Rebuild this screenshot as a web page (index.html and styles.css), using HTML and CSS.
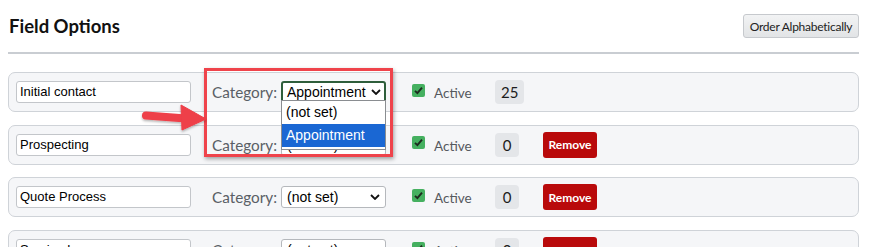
FILE: index.html
```html
<!DOCTYPE html>
<html>
<head>
<meta charset="utf-8">
<link rel="stylesheet" href="styles.css">
</head>
<body>
<div class="page">
  <header class="head">
    <h1 class="title">Field Options</h1>
    <button class="btn-order">Order Alphabetically</button>
  </header>
  <div class="divider"></div>
  <div class="list">
    <div class="row">
      <div class="txt">Initial contact</div>
      <span class="cat">Category:</span>
      <div class="sel sel-focus"><span>Appointment</span><svg class="chev" viewBox="0 0 10 6"><path d="M1 1 L5 5 L9 1" fill="none" stroke="#111" stroke-width="1.8"/></svg></div>
      <span class="chk"><svg viewBox="0 0 13 13"><path d="M3 6.8 L5.4 9.2 L10 3.6" fill="none" stroke="#1d2b1f" stroke-width="1.9"/></svg></span>
      <span class="act">Active</span>
      <div class="badge-cell"><span class="badge">25</span></div>
    </div>
    <div class="row">
      <div class="txt">Prospecting</div>
      <span class="cat">Category:</span>
      <div class="sel"><span>(not set)</span><svg class="chev" viewBox="0 0 10 6"><path d="M1 1 L5 5 L9 1" fill="none" stroke="#111" stroke-width="1.8"/></svg></div>
      <span class="chk"><svg viewBox="0 0 13 13"><path d="M3 6.8 L5.4 9.2 L10 3.6" fill="none" stroke="#1d2b1f" stroke-width="1.9"/></svg></span>
      <span class="act">Active</span>
      <div class="badge-cell"><span class="badge">0</span></div>
      <button class="btn-remove">Remove</button>
    </div>
    <div class="row">
      <div class="txt">Quote Process</div>
      <span class="cat">Category:</span>
      <div class="sel"><span>(not set)</span><svg class="chev" viewBox="0 0 10 6"><path d="M1 1 L5 5 L9 1" fill="none" stroke="#111" stroke-width="1.8"/></svg></div>
      <span class="chk"><svg viewBox="0 0 13 13"><path d="M3 6.8 L5.4 9.2 L10 3.6" fill="none" stroke="#1d2b1f" stroke-width="1.9"/></svg></span>
      <span class="act">Active</span>
      <div class="badge-cell"><span class="badge">0</span></div>
      <button class="btn-remove">Remove</button>
    </div>
    <div class="row">
      <div class="txt">Service Issue</div>
      <span class="cat">Category:</span>
      <div class="sel"><span>(not set)</span><svg class="chev" viewBox="0 0 10 6"><path d="M1 1 L5 5 L9 1" fill="none" stroke="#111" stroke-width="1.8"/></svg></div>
      <span class="chk"><svg viewBox="0 0 13 13"><path d="M3 6.8 L5.4 9.2 L10 3.6" fill="none" stroke="#1d2b1f" stroke-width="1.9"/></svg></span>
      <span class="act">Active</span>
      <div class="badge-cell"><span class="badge">0</span></div>
      <button class="btn-remove">Remove</button>
    </div>
  </div>

  <div class="dropdown">
    <div class="opt">(not set)</div>
    <div class="opt opt-hi">Appointment</div>
  </div>
  <div class="callout"></div>
  <svg class="arrow" viewBox="0 0 80 34" width="80" height="34">
    <defs>
      <filter id="sh" x="-20%" y="-20%" width="140%" height="160%">
        <feDropShadow dx="0" dy="1.5" stdDeviation="1.2" flood-color="#000" flood-opacity="0.3"/>
      </filter>
    </defs>
    <g filter="url(#sh)" fill="#ee3f48" stroke="#ee3f48">
      <line x1="8" y1="12.5" x2="48" y2="15.5" stroke-width="8" stroke-linecap="round"/>
      <polygon points="43,2 68,16 44,27" stroke-width="1" stroke-linejoin="round"/>
    </g>
  </svg>
</div>
</body>
</html>
```
FILE: styles.css
```css
* { box-sizing: border-box; }
html, body { margin: 0; padding: 0; background: #fff; }
body { font-family: Lato, "Noto Sans", sans-serif; overflow: hidden; width: 870px; height: 247px; }
.page { position: relative; padding: 0 11px 0 8px; height: 247px; overflow: hidden; }
.head { height: 52px; display: flex; align-items: center; justify-content: space-between; }
.title { margin: 0 0 0 1px; font-size: 18.5px; font-weight: 700; color: #111; letter-spacing: 0; }
.btn-order {
  width: 116px; height: 24px; padding: 0; margin: 0; white-space: nowrap;
  font-family: Lato, "Noto Sans", sans-serif; font-size: 12px; letter-spacing: -0.25px; color: #222;
  background: linear-gradient(#f2f3f4, #e2e4e6);
  border: 1px solid #c6c9cd; border-radius: 3px;
}
.divider { height: 2px; background: #c9cdd2; }
.list { margin-top: 18px; }
.row {
  height: 40px; margin-bottom: 12.7px;
  display: flex; align-items: center;
  padding-left: 7px;
  background: #f5f6f8; border: 1px solid #cfd3d8; border-radius: 7px;
}
.txt {
  width: 175px; height: 22px; padding: 0 3px;
  background: #fff; border: 1px solid #c3c6ca; border-radius: 3px;
  font-family: "Liberation Sans", Arial, sans-serif; font-size: 13px; line-height: 20px; color: #000;
}
.cat { width: 69px; margin-left: 21px; font-size: 15.3px; color: #5a5f66; }
.sel {
  width: 105px; height: 22px; display: flex; align-items: center; justify-content: space-between;
  padding: 0 5px 0 5px;
  background: #fff; border: 1px solid #b5b8bc; border-radius: 3px;
  font-family: "Liberation Sans", Arial, sans-serif; font-size: 14px; color: #000;
}
.sel-focus { border: 2px solid #2e5e3b; padding-left: 4px; padding-right: 3px; }
.chev { width: 10px; height: 6px; }
.chk {
  width: 13px; height: 13px; margin-left: 26px; margin-top: -4px;
  background: #45b060; border-radius: 2px; display: flex;
}
.chk svg { width: 13px; height: 13px; }
.act { width: 61px; margin-left: 9px; margin-top: 2px; font-size: 13.5px; color: #55595e; }
.badge-cell { width: 48px; display: flex; }
.badge {
  min-width: 24px; height: 24px; padding: 0 6px;
  display: flex; align-items: center; justify-content: center;
  background: #e4e6e9; border-radius: 4px; font-size: 15px; color: #1c1c1c;
}
.btn-remove {
  width: 54px; height: 26px; padding: 0; margin: 0;
  background: #b90a0b; color: #fff; border: none; border-radius: 3px;
  font-family: Lato, "Noto Sans", sans-serif; font-size: 12px; font-weight: 700;
}
.dropdown {
  position: absolute; left: 281px; top: 100px; width: 105px; padding-bottom: 2px;
  background: #fff; border: 1px solid #8a8d91;
  font-family: "Liberation Sans", Arial, sans-serif; font-size: 14px; color: #000;
}
.opt { height: 23px; line-height: 23px; padding-left: 4px; }
.opt-hi { background: #1a67d3; color: #fff; }
.callout {
  position: absolute; left: 204px; top: 68px; width: 189px; height: 89px;
  border: 3px solid #ef434b;
  box-shadow: 1px 2px 4px rgba(0,0,0,0.35);
}
.arrow { position: absolute; left: 138px; top: 103px; }
```
